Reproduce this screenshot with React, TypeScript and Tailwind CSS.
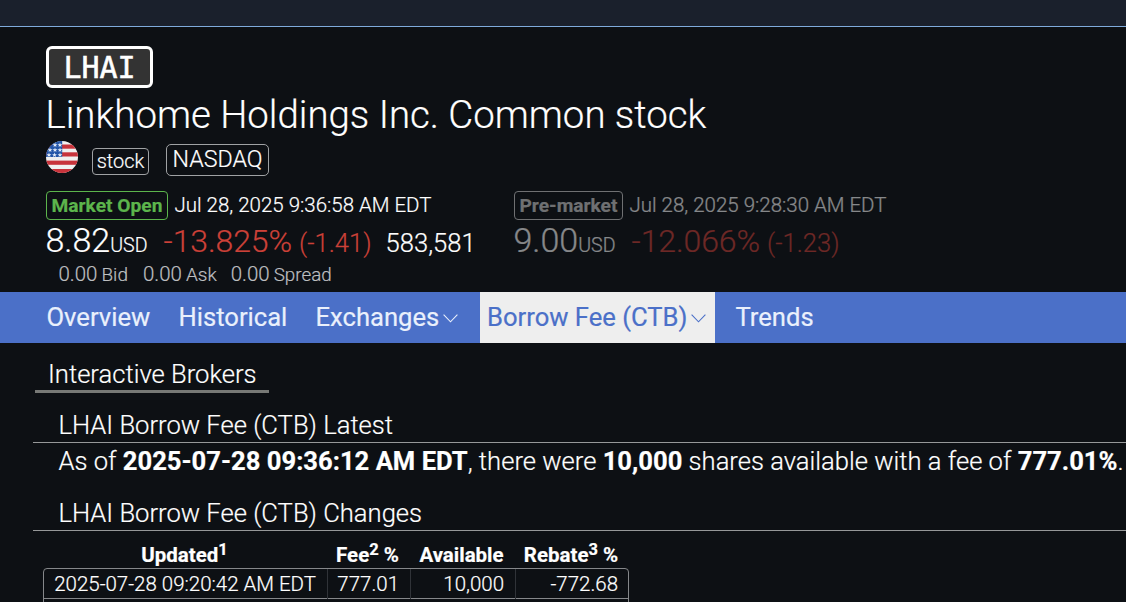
import React from "react";

function Flag() {
  return (
    <svg className="block h-8 w-8" viewBox="0 0 32 32">
      <defs>
        <clipPath id="flag-disc">
          <circle cx="16" cy="16" r="16" />
        </clipPath>
      </defs>
      <g clipPath="url(#flag-disc)">
        <rect width="32" height="32" fill="#f0f0f0" />
        {[3.5, 11.3, 19.6, 28].map((y) => (
          <rect key={y} y={y} width="32" height="4.2" fill="#c8333b" />
        ))}
        <rect width="16.2" height="16" fill="#2456a8" />
        {[
          [9, 4], [14, 4],
          [4, 9], [9, 9], [14, 9],
          [3, 14], [8.5, 14], [14, 14],
        ].map(([x, y]) => (
          <path
            key={`${x}-${y}`}
            transform={`translate(${x} ${y})`}
            d="M0-2.4.6-.7 2.4-.7 1 .4 1.5 2.1 0 1-1.5 2.1-1 .4-2.4-.7-.6-.7Z"
            fill="#e4ecf8"
          />
        ))}
      </g>
    </svg>
  );
}

function Chevron() {
  return (
    <svg className="mt-[1px] ml-[3.5px] h-[9px] w-[15px]" viewBox="0 0 15 9" fill="none" stroke="currentColor" strokeWidth="1.1">
      <path d="M.6.6 7.5 7.8 14.4.6" />
    </svg>
  );
}

function SectionTitle({ children }: { children: React.ReactNode }) {
  return (
    <h2 className="ml-[33px] h-[34px] border-b border-[#969899] pl-[25.5px] text-[25.6px] leading-[33px] font-light whitespace-nowrap">
      {children}
    </h2>
  );
}

function Note({ children }: { children: React.ReactNode }) {
  return <span className="relative top-[-7px] text-[16.5px] leading-none">{children}</span>;
}

export default function App() {
  return (
    <div className="h-[602px] w-[1126px] overflow-hidden bg-[#0d1014] font-['Roboto',sans-serif] font-light text-white [-webkit-text-stroke:0.2px]">
      <div className="h-[27px] border-b border-[#7fabdc] bg-[#1a202c]" />

      <header className="h-[265px] pt-[19px] pl-[46px] whitespace-nowrap">
        <div className="flex h-[42px] w-[107px] items-center justify-center rounded-[6px] border-[3px] border-white bg-[#333] pt-[2px] font-['DejaVu_Sans_Mono',monospace] text-[30px] leading-[36px] font-normal [-webkit-text-stroke:0.5px]">
          LHAI
        </div>
        <h1 className="-ml-[0.5px] h-[53px] text-[38.4px] leading-[54px] font-light">Linkhome Holdings Inc. Common stock</h1>
        <div className="flex h-[50px] items-start">
          <Flag />
          <span className="mt-[7px] ml-[14px] flex h-[27px] w-[57px] justify-center rounded-[4px] border border-[#a0a2a4] text-[20px] leading-[25px]">stock</span>
          <span className="mt-[3px] ml-[17px] flex h-[32px] w-[103px] justify-center rounded-[5px] border border-[#a0a2a4] text-[23.2px] leading-[29px]">NASDAQ</span>
        </div>
        <div className="flex">
          <section className="w-[468px]">
            <div className="flex h-[29px] text-[20.48px] leading-[27px]">
              <span className="flex w-[122px] justify-center rounded-[4px] border border-[#5cb54c] text-[19.2px] leading-[27px] font-bold text-[#5cb54c]">Market Open</span>
              <span className="ml-[6.5px] pt-px">Jul 28, 2025 9:36:58 AM EDT</span>
            </div>
            <div className="-ml-[0.5px] flex h-[41px] items-baseline leading-[41px]">
              <span className="text-[34px]">8.82</span>
              <span className="text-[19.6px]">USD</span>
              <span className="ml-[16px] text-[32px] tracking-[-0.1px] text-[#cc4138]">-13.825%</span>
              <span className="ml-[7px] text-[25.6px] text-[#cc4138]">(-1.41)</span>
              <span className="ml-[14px] text-[25.6px]">583,581</span>
            </div>
            <div className="flex h-[30px] items-baseline pl-[12.5px] leading-[26px] text-[#bdbfc0]">
              <span className="text-[20.48px]">0.00</span>
              <span className="ml-[4px] text-[19px]">Bid</span>
              <span className="ml-[15px] text-[20.48px]">0.00</span>
              <span className="ml-[4px] text-[19px]">Ask</span>
              <span className="ml-[14px] text-[20.48px]">0.00</span>
              <span className="ml-[4px] text-[18.8px]">Spread</span>
            </div>
          </section>
          <section className="opacity-50">
            <div className="flex h-[29px] text-[20.48px] leading-[27px]">
              <span className="flex w-[109px] justify-center rounded-[4px] border border-[#d0d0d0] text-[19.2px] leading-[27px] font-bold text-[#d0d0d0]">Pre-market</span>
              <span className="ml-[6.5px] pt-px">Jul 28, 2025 9:28:30 AM EDT</span>
            </div>
            <div className="-ml-[0.5px] flex h-[41px] items-baseline leading-[41px]">
              <span className="text-[34px]">9.00</span>
              <span className="text-[19.6px]">USD</span>
              <span className="ml-[16px] text-[32px] tracking-[-0.1px] text-[#cc4138]">-12.066%</span>
              <span className="ml-[7px] text-[25.6px] text-[#cc4138]">(-1.23)</span>
            </div>
          </section>
        </div>
      </header>

      <nav className="flex h-[51px] bg-[#4b70c8] pl-[46.5px] text-[25.6px] leading-[51px] font-normal whitespace-nowrap text-[#eaf0fc]">
        <a className="w-[132px]">Overview</a>
        <a className="w-[137px]">Historical</a>
        <a className="flex w-[164.5px] items-center">
          Exchanges
          <Chevron />
        </a>
        <a className="flex w-[235px] items-center bg-[#eee] pl-[7px] text-[#4b70c8]">
          Borrow Fee (CTB)
          <Chevron />
        </a>
        <a className="ml-[20.5px]">Trends</a>
      </nav>

      <main>
        <div className="mt-[15px] ml-[35px] h-[35px] w-[234px] border-b-[3px] border-[#777976] pl-[13px] text-[25.6px] leading-[33px] whitespace-nowrap">
          Interactive Brokers
        </div>
        <div className="mt-[16px]">
          <SectionTitle>LHAI Borrow Fee (CTB) Latest</SectionTitle>
          <p className="h-[54px] pl-[58.5px] text-[25.6px] leading-[37px] whitespace-nowrap">
            As of <b className="font-bold">2025-07-28 09:36:12 AM EDT</b>, there were <b className="font-bold">10,000</b> shares available with a fee of <b className="font-bold">777.01%</b>.
          </p>
          <SectionTitle>LHAI Borrow Fee (CTB) Changes</SectionTitle>
        </div>
        <div className="mt-[9px] ml-[43px] w-[586px] text-[20.48px] whitespace-nowrap">
          <div className="grid h-[28px] grid-cols-[283px_83px_105px_114px] text-center leading-[31px] font-bold">
            <span>Updated<Note>1</Note></span>
            <span>Fee<Note>2</Note> %</span>
            <span>Available</span>
            <span>Rebate<Note>3</Note> %</span>
          </div>
          <div className="h-[60px] rounded-[4px] border border-[#85878a]">
            <div className="grid h-[30px] grid-cols-[284px_83px_105px_112px] border-b border-[#85878a] text-right leading-[30px]">
              <span className="border-r border-[#303338] pr-[11px]">2025-07-28 09:20:42 AM EDT</span>
              <span className="border-r border-[#303338] pr-[11px]">777.01</span>
              <span className="border-r border-[#303338] pr-[11px]">10,000</span>
              <span className="pr-[10px]">-772.68</span>
            </div>
          </div>
        </div>
      </main>
    </div>
  );
}
